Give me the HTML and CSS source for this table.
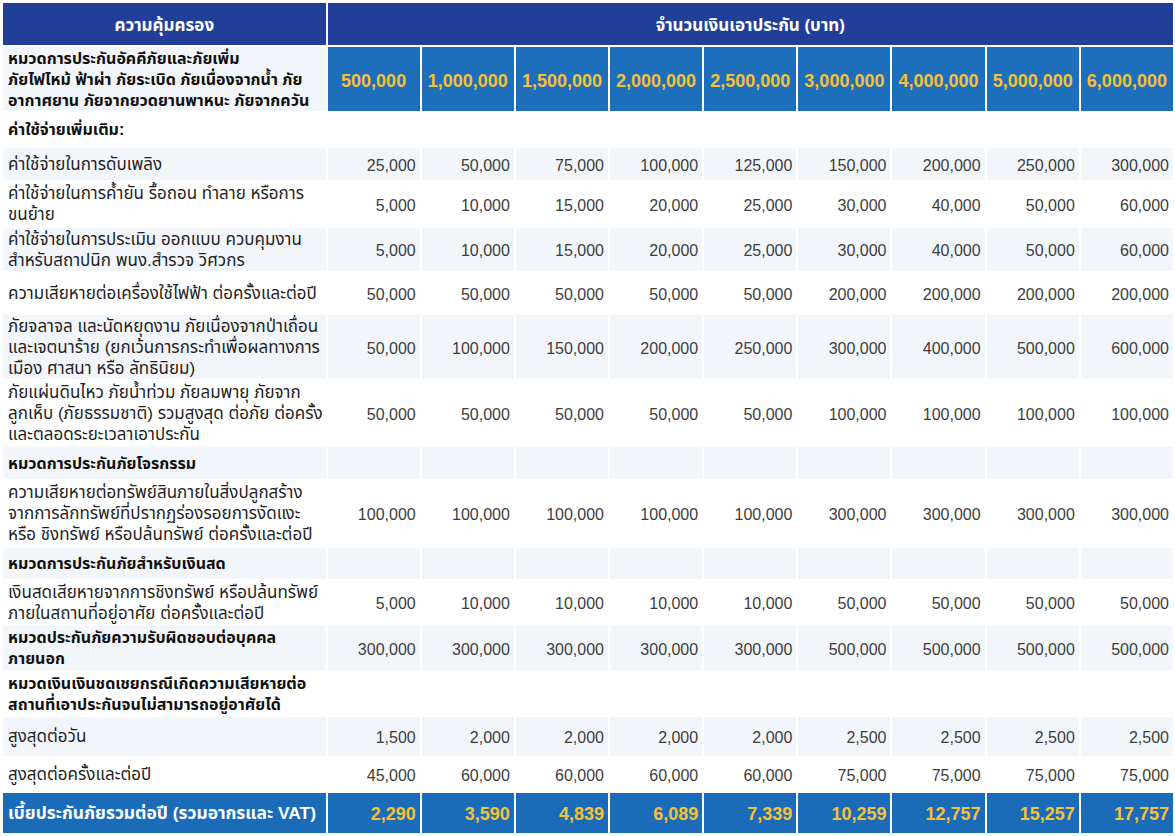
FILE: index.html
```html
<!DOCTYPE html>
<html lang="th">
<head>
<meta charset="utf-8">
<title>ความคุ้มครอง</title>
<link rel="stylesheet" href="styles.css">
</head>
<body>
<table class="cov">
  <colgroup>
    <col class="c-label">
    <col class="c-amt"><col class="c-amt"><col class="c-amt"><col class="c-amt"><col class="c-amt">
    <col class="c-amt"><col class="c-amt"><col class="c-amt"><col class="c-amt">
  </colgroup>
  <thead>
    <tr class="h42">
      <th class="head">ความคุ้มครอง</th>
      <th class="head" colspan="9">จำนวนเงินเอาประกัน (บาท)</th>
    </tr>
  </thead>
  <tbody>
    <tr class="h64 alt">
      <td class="lbl strong">หมวดการประกันอัคคีภัยและภัยเพิ่ม<br>ภัยไฟไหม้ ฟ้าผ่า ภัยระเบิด ภัยเนื่องจากน้ำ ภัย<br>อากาศยาน ภัยจากยวดยานพาหนะ ภัยจากควัน</td>
      <td class="sum">500,000</td><td class="sum">1,000,000</td><td class="sum">1,500,000</td><td class="sum">2,000,000</td><td class="sum">2,500,000</td><td class="sum">3,000,000</td><td class="sum">4,000,000</td><td class="sum">5,000,000</td><td class="sum">6,000,000</td>
    </tr>
    <tr class="h33">
      <td class="lbl strong">ค่าใช้จ่ายเพิ่มเติม:</td>
      <td></td><td></td><td></td><td></td><td></td><td></td><td></td><td></td><td></td>
    </tr>
    <tr class="h32 alt">
      <td class="lbl">ค่าใช้จ่ายในการดับเพลิง</td>
      <td class="num">25,000</td><td class="num">50,000</td><td class="num">75,000</td><td class="num">100,000</td><td class="num">125,000</td><td class="num">150,000</td><td class="num">200,000</td><td class="num">250,000</td><td class="num">300,000</td>
    </tr>
    <tr class="h44">
      <td class="lbl">ค่าใช้จ่ายในการค้ำยัน รื้อถอน ทำลาย หรือการ<br>ขนย้าย</td>
      <td class="num">5,000</td><td class="num">10,000</td><td class="num">15,000</td><td class="num">20,000</td><td class="num">25,000</td><td class="num">30,000</td><td class="num">40,000</td><td class="num">50,000</td><td class="num">60,000</td>
    </tr>
    <tr class="h43 alt">
      <td class="lbl">ค่าใช้จ่ายในการประเมิน ออกแบบ ควบคุมงาน<br>สำหรับสถาปนิก พนง.สำรวจ วิศวกร</td>
      <td class="num">5,000</td><td class="num">10,000</td><td class="num">15,000</td><td class="num">20,000</td><td class="num">25,000</td><td class="num">30,000</td><td class="num">40,000</td><td class="num">50,000</td><td class="num">60,000</td>
    </tr>
    <tr class="h40">
      <td class="lbl">ความเสียหายต่อเครื่องใช้ไฟฟ้า ต่อครั้งและต่อปี</td>
      <td class="num">50,000</td><td class="num">50,000</td><td class="num">50,000</td><td class="num">50,000</td><td class="num">50,000</td><td class="num">200,000</td><td class="num">200,000</td><td class="num">200,000</td><td class="num">200,000</td>
    </tr>
    <tr class="h64 alt">
      <td class="lbl">ภัยจลาจล และนัดหยุดงาน ภัยเนื่องจากป่าเถื่อน<br>และเจตนาร้าย (ยกเว้นการกระทำเพื่อผลทางการ<br>เมือง ศาสนา หรือ ลัทธินิยม)</td>
      <td class="num">50,000</td><td class="num">100,000</td><td class="num">150,000</td><td class="num">200,000</td><td class="num">250,000</td><td class="num">300,000</td><td class="num">400,000</td><td class="num">500,000</td><td class="num">600,000</td>
    </tr>
    <tr class="h64">
      <td class="lbl">ภัยแผ่นดินไหว ภัยน้ำท่วม ภัยลมพายุ ภัยจาก<br>ลูกเห็บ (ภัยธรรมชาติ) รวมสูงสุด ต่อภัย ต่อครั้ง<br>และตลอดระยะเวลาเอาประกัน</td>
      <td class="num">50,000</td><td class="num">50,000</td><td class="num">50,000</td><td class="num">50,000</td><td class="num">50,000</td><td class="num">100,000</td><td class="num">100,000</td><td class="num">100,000</td><td class="num">100,000</td>
    </tr>
    <tr class="h32 alt">
      <td class="lbl strong">หมวดการประกันภัยโจรกรรม</td>
      <td></td><td></td><td></td><td></td><td></td><td></td><td></td><td></td><td></td>
    </tr>
    <tr class="h65">
      <td class="lbl">ความเสียหายต่อทรัพย์สินภายในสิ่งปลูกสร้าง<br>จากการลักทรัพย์ที่ปรากฏร่องรอยการงัดแงะ<br>หรือ ชิงทรัพย์ หรือปล้นทรัพย์ ต่อครั้งและต่อปี</td>
      <td class="num">100,000</td><td class="num">100,000</td><td class="num">100,000</td><td class="num">100,000</td><td class="num">100,000</td><td class="num">300,000</td><td class="num">300,000</td><td class="num">300,000</td><td class="num">300,000</td>
    </tr>
    <tr class="h31 alt">
      <td class="lbl strong">หมวดการประกันภัยสำหรับเงินสด</td>
      <td></td><td></td><td></td><td></td><td></td><td></td><td></td><td></td><td></td>
    </tr>
    <tr class="h43">
      <td class="lbl">เงินสดเสียหายจากการชิงทรัพย์ หรือปล้นทรัพย์<br>ภายในสถานที่อยู่อาศัย ต่อครั้งและต่อปี</td>
      <td class="num">5,000</td><td class="num">10,000</td><td class="num">10,000</td><td class="num">10,000</td><td class="num">10,000</td><td class="num">50,000</td><td class="num">50,000</td><td class="num">50,000</td><td class="num">50,000</td>
    </tr>
    <tr class="h44 alt">
      <td class="lbl strong">หมวดประกันภัยความรับผิดชอบต่อบุคคล<br>ภายนอก</td>
      <td class="num">300,000</td><td class="num">300,000</td><td class="num">300,000</td><td class="num">300,000</td><td class="num">300,000</td><td class="num">500,000</td><td class="num">500,000</td><td class="num">500,000</td><td class="num">500,000</td>
    </tr>
    <tr class="h43">
      <td class="lbl strong">หมวดเงินเงินชดเชยกรณีเกิดความเสียหายต่อ<br>สถานที่เอาประกันจนไม่สามารถอยู่อาศัยได้</td>
      <td></td><td></td><td></td><td></td><td></td><td></td><td></td><td></td><td></td>
    </tr>
    <tr class="h39 alt">
      <td class="lbl">สูงสุดต่อวัน</td>
      <td class="num">1,500</td><td class="num">2,000</td><td class="num">2,000</td><td class="num">2,000</td><td class="num">2,000</td><td class="num">2,500</td><td class="num">2,500</td><td class="num">2,500</td><td class="num">2,500</td>
    </tr>
    <tr class="h33">
      <td class="lbl">สูงสุดต่อครั้งและต่อปี</td>
      <td class="num">45,000</td><td class="num">60,000</td><td class="num">60,000</td><td class="num">60,000</td><td class="num">60,000</td><td class="num">75,000</td><td class="num">75,000</td><td class="num">75,000</td><td class="num">75,000</td>
    </tr>
    <tr class="h40 total">
      <td class="lbl tot-lbl">เบี้ยประกันภัยรวมต่อปี (รวมอากรและ VAT)</td>
      <td class="tot">2,290</td><td class="tot">3,590</td><td class="tot">4,839</td><td class="tot">6,089</td><td class="tot">7,339</td><td class="tot">10,259</td><td class="tot">12,757</td><td class="tot">15,257</td><td class="tot">17,757</td>
    </tr>
  </tbody>
</table>
</body>
</html>
```

FILE: styles.css
```css
html, body {
  margin: 0;
  padding: 0;
  background: #ffffff;
}

body {
  padding: 1px 0 0 1px;
  font-family: "Liberation Sans", "Noto Sans Thai", "Noto Sans", Arial, sans-serif;
  color: #222;
}

.cov {
  width: 1174px;
  border-collapse: separate;
  border-spacing: 2px;
  table-layout: fixed;
  background: #ffffff;
}

.c-label { width: 322px; }
.c-amt { width: 92px; }

.cov th,
.cov td {
  box-sizing: border-box;
  padding: 0;
  vertical-align: middle;
  overflow: hidden;
}

.head {
  background: #213f99;
  color: #ffffff;
  font-size: 17px;
  font-weight: bold;
  text-align: center;
  padding-top: 3px !important;
}

.alt td { background: #f2f6fb; }

.lbl {
  font-size: 17px;
  line-height: 21px;
  padding-left: 5px !important;
  color: #1f1f1f;
  white-space: nowrap;
}

.strong {
  font-weight: bold;
  font-size: 16px;
  color: #111;
}

.num {
  font-size: 16px;
  line-height: 20px;
  text-align: right;
  padding-right: 4px !important;
  padding-top: 3px !important;
  color: #3d3d3d;
  white-space: nowrap;
}

.alt .sum,
.sum {
  background: #1e6fbb;
  color: #f7c136;
  font-size: 18px;
  line-height: 22px;
  font-weight: bold;
  text-align: center;
  padding-top: 3px !important;
  white-space: nowrap;
}

.total td {
  background: #1b6cb8;
}

.tot-lbl {
  color: #ffffff;
  font-weight: bold;
  font-size: 17.4px;
}

.tot {
  color: #f7c136;
  font-size: 18px;
  line-height: 22px;
  font-weight: bold;
  text-align: right;
  padding-right: 4px !important;
  padding-top: 2px !important;
  white-space: nowrap;
}

.h31 td { height: 31px; }
.h32 td { height: 32px; }
.h33 td { height: 33px; }
.h39 td { height: 39px; }
.h40 td { height: 40px; }
.h42 th { height: 42px; }
.h43 td { height: 43px; }
.h44 td { height: 44px; }
.h64 td { height: 64px; }
.h65 td { height: 65px; }
```
